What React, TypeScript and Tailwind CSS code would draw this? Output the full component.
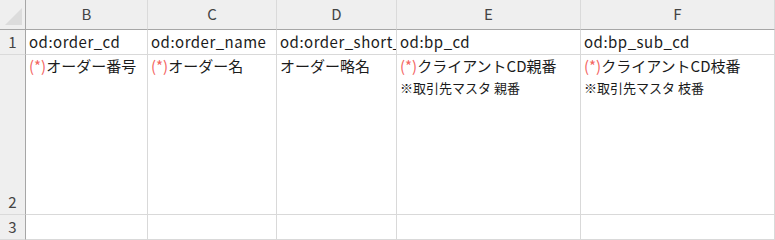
import React from "react";

const Req: React.FC = () => <span className="text-[#f4645f]">(*)</span>;

const App: React.FC = () => {
  const cols = ["B", "C", "D", "E", "F"];
  const row1 = ["od:order_cd", "od:order_name", "od:order_short_name", "od:bp_cd", "od:bp_sub_cd"];
  const row2 = [
    { req: true, label: "オーダー番号" },
    { req: true, label: "オーダー名" },
    { req: false, label: "オーダー略名" },
    { req: true, label: "クライアントCD親番", note: "※取引先マスタ 親番" },
    { req: true, label: "クライアントCD枝番", note: "※取引先マスタ 枝番" },
  ];

  const cell = "border-r border-b border-[#d9d9d9] overflow-hidden whitespace-nowrap";

  return (
    <div
      className="w-[775px] h-[240px] bg-white text-[#1b1b1b] overflow-hidden"
      style={{ fontFamily: '"Noto Sans CJK JP", "Noto Sans", sans-serif' }}
    >
      <div className="grid grid-cols-[26px_122px_129px_120px_184px_194px] grid-rows-[30px_25px_160px_25px]">
        {/* corner */}
        <div className="bg-[#efefef] border-r border-b border-r-[#a6a6a6] border-b-[#a6a6a6] relative">
          <svg className="absolute left-[5px] top-[8px]" width="18" height="18" viewBox="0 0 18 18">
            <polygon points="0,17 17,0 17,17" fill="#dcdcdc" />
          </svg>
        </div>
        {cols.map((c) => (
          <div
            key={c}
            className="bg-[#efefef] border-r border-b border-r-[#dadada] border-b-[#a6a6a6] flex items-center justify-center text-[15px] text-[#444]"
          >
            {c}
          </div>
        ))}

        {/* row 1 */}
        <div className="bg-[#efefef] border-r border-b border-r-[#a6a6a6] border-b-[#dadada] flex items-center justify-center text-[15px] text-[#444]">
          1
        </div>
        {row1.map((t, i) => (
          <div key={i} className={`${cell} flex items-center pl-[3px] text-[15px] tracking-[0.5px]`}>
            {t}
          </div>
        ))}

        {/* row 2 */}
        <div className="bg-[#efefef] border-r border-b border-r-[#a6a6a6] border-b-[#dadada] flex items-end justify-center pb-[1px] text-[15px] text-[#444]">
          2
        </div>
        {row2.map((c, i) => (
          <div key={i} className={`${cell} pl-[3px] flex flex-col`}>
            <div className="text-[15px] leading-[22px]">
              {c.req && <Req />}
              {c.label}
            </div>
            {c.note && <div className="text-[13px] leading-[22px]">{c.note}</div>}
          </div>
        ))}

        {/* row 3 */}
        <div className="bg-[#efefef] border-r border-b border-r-[#a6a6a6] border-b-[#dadada] flex items-center justify-center text-[15px] text-[#444]">
          3
        </div>
        {cols.map((c) => (
          <div key={c} className={cell} />
        ))}
      </div>
    </div>
  );
};

export default App;
